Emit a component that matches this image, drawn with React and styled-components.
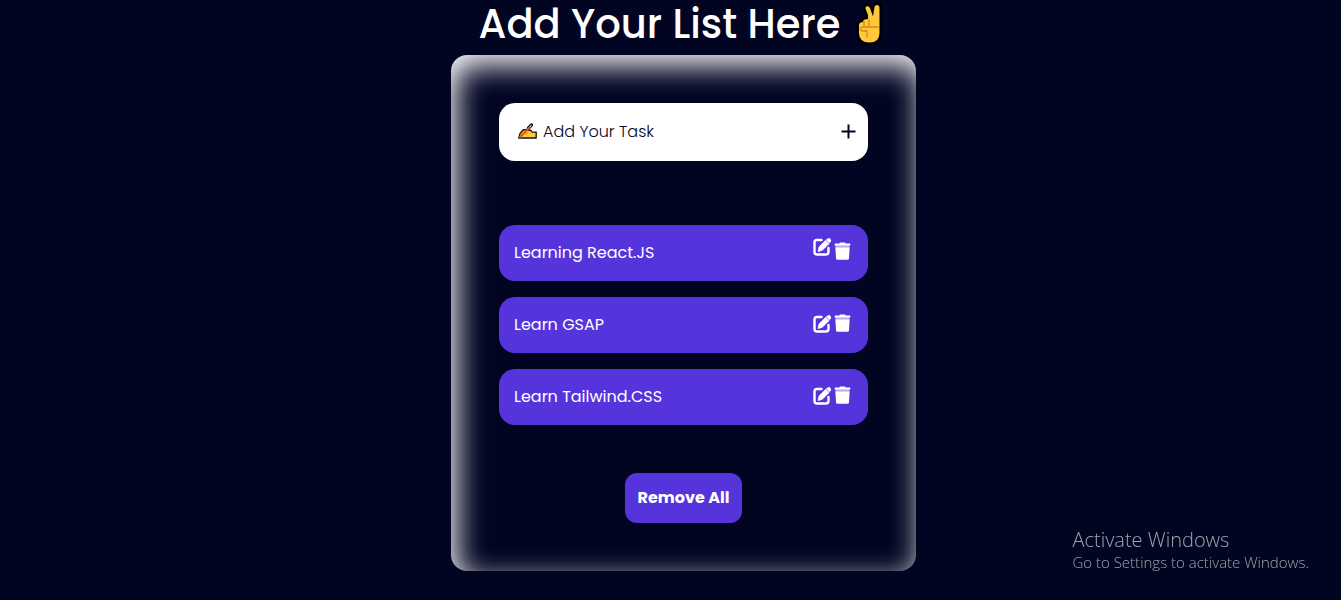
import React, { useState } from "react";
import styled, { createGlobalStyle } from "styled-components";

const GlobalStyle = createGlobalStyle`
  *, *::before, *::after { box-sizing: border-box; }
  body {
    margin: 0;
    background: #020522;
    color: #fff;
    font-family: Poppins, Inter, sans-serif;
    font-size: 16px;
  }
  button, input { font: inherit; }
`;

const Page = styled.main`
  display: flex;
  flex-direction: column;
  align-items: center;
  min-height: 100vh;
  padding: 0 0 24px 26px;
`;

const Title = styled.h1`
  display: flex;
  align-items: center;
  gap: 16px;
  margin: 0 0 7px;
  font-size: 40px;
  font-weight: 500;
  line-height: 48px;
`;

const Card = styled.section`
  display: flex;
  flex-direction: column;
  align-items: center;
  width: 100%;
  max-width: 465px;
  padding: 48px;
  border-radius: 16px;
  box-shadow: inset 5px 10px 30px #fff;
`;

const TaskForm = styled.form`
  display: flex;
  align-items: center;
  gap: 5px;
  width: 100%;
  height: 58px;
  margin-bottom: 64px;
  padding: 0 12px 2px 19px;
  border-radius: 16px;
  background: #fff;
`;

const TaskInput = styled.input`
  flex: 1;
  min-width: 0;
  padding: 0;
  border: 0;
  outline: 0;
  background: none;
  color: #020522;
  font-weight: 300;
  &::placeholder { color: #020522; opacity: 1; }
`;

const IconButton = styled.button`
  display: flex;
  padding: 0;
  border: 0;
  background: none;
  color: ${(p) => (p.$dark ? "#020522" : "#fff")};
  align-self: ${(p) => (p.$raised ? "flex-start" : "center")};
  cursor: pointer;
`;

const TaskList = styled.ul`
  display: flex;
  flex-direction: column;
  gap: 16px;
  width: 100%;
  margin: 0 0 48px;
  padding: 0;
  list-style: none;
`;

const TaskItem = styled.li`
  display: flex;
  align-items: center;
  justify-content: space-between;
  height: 56px;
  padding: 0 17px 2px 15px;
  border-radius: 16px;
  background: #5634db;
`;

const Actions = styled.div`
  display: flex;
  gap: 2px;
  height: 30px;
  padding-bottom: 2px;
`;

const RemoveButton = styled.button`
  height: 50px;
  padding: 0 13px 2px;
  border: 0;
  border-radius: 12px;
  background: #5634db;
  color: #fff;
  font-weight: 700;
  cursor: pointer;
`;

const Notice = styled.aside`
  position: fixed;
  right: 32px;
  bottom: 28px;
  color: #a2a3ab;
  font-family: "Segoe UI", "Open Sans", sans-serif;
  font-size: 15px;
  font-weight: 300;
  line-height: 20px;
`;

const NoticeTitle = styled.p`
  margin: 0;
  font-size: 20px;
  line-height: 24px;
`;

const NoticeText = styled.p`
  margin: 0;
`;

function VictoryHand() {
  const hand =
    "M19 25Q19 22 23 22V21Q24 19 28 19V15L25.500 8.500Q25 6.500 27 6.300Q29 6 30 8L33 16.500 34.500 7Q35 5 37.200 5Q39.500 5 39.500 7.500V33Q39.500 42.500 29.500 42.500Q19 42.500 19 33Z";
  return (
    <svg width="32" height="44" viewBox="16 2 32 44" aria-label="Victory hand" role="img">
      <path d={hand} fill="#000" stroke="#000" strokeWidth="5" strokeLinejoin="round" />
      <path d={hand} fill="#ffc83d" />
      <path
        d="M24 21.500V26.500M29 20V26.500M38.500 27H23Q20.500 27 20.500 29T23 31H27V37"
        fill="none"
        stroke="#d68b10"
        strokeWidth="1.300"
        strokeLinecap="round"
        strokeLinejoin="round"
      />
    </svg>
  );
}

function WritingHand() {
  return (
    <svg width="20" height="18" viewBox="0 0 20 18" aria-hidden="true">
      <path
        d="M0.800 16L2 11.500 5 8 9 7.500 13 8.500 14 10 18.200 10.200V16Z"
        fill="#ffc83d"
        stroke="#181008"
        strokeWidth="1.300"
        strokeLinejoin="round"
      />
      <path d="M10.500 6L13.500 3" stroke="#181008" strokeWidth="3.400" strokeLinecap="round" />
      <path d="M1.500 15.500L11.500 5.500" stroke="#e8502a" strokeWidth="2" />
      <path d="M11.500 5.500L13.500 3.200" stroke="#b8c2cc" strokeWidth="1.200" />
      <path d="M7.500 12.500l3-2.500" stroke="#f29b20" strokeWidth="1.400" />
    </svg>
  );
}

function PlusIcon() {
  return (
    <svg width="15" height="15" viewBox="0 0 15 15" aria-hidden="true">
      <path d="M7.500 0.500v14M0.500 7.500h14" stroke="currentColor" strokeWidth="2" />
    </svg>
  );
}

function EditIcon() {
  return (
    <svg width="19" height="19" viewBox="0 0 19 19" aria-hidden="true">
      <path
        d="M8.500 3H4Q1.500 3 1.500 5.500V15Q1.500 17.500 4 17.500H13Q15.500 17.500 15.500 15V11"
        fill="none"
        stroke="currentColor"
        strokeWidth="2.400"
        strokeLinecap="round"
      />
      <path d="M12.500 3L16.200 6.700" stroke="currentColor" strokeWidth="2" opacity="0.600" />
      <path
        d="M5.200 14.500L6 10 12.300 3.700 15.600 7 9.300 13.300Z"
        fill="currentColor"
        stroke="currentColor"
        strokeWidth="0.800"
        strokeLinejoin="round"
      />
      <path d="M13.300 2.800L14.500 1.500Q15.800 0.300 17.300 1.700T17.800 4.800L16.500 6Z" fill="currentColor" />
    </svg>
  );
}

function TrashIcon() {
  return (
    <svg width="17" height="18" viewBox="0 0 17 18" aria-hidden="true">
      <path
        d="M1 1.500H5.300L6.300 0.500H10.700L11.700 1.500H16Q17 2.500 16 3.800H1Q0 2.500 1 1.500Z"
        fill="currentColor"
      />
      <path d="M1.500 3.800H15.500V5.200H1.500Z" fill="currentColor" opacity="0.600" />
      <path d="M1.300 5.200H15.700L15 16.200Q14.900 17.700 13.300 17.700H3.700Q2.100 17.700 2 16.200Z" fill="currentColor" />
    </svg>
  );
}

const initialTasks = [
  { name: "Learning React.JS", active: true },
  { name: "Learn GSAP" },
  { name: "Learn Tailwind.CSS" },
];

export default function App() {
  const [tasks, setTasks] = useState(initialTasks);
  const [draft, setDraft] = useState("");

  const addTask = (event) => {
    event.preventDefault();
    if (!draft.trim()) return;
    setTasks([...tasks, { name: draft.trim() }]);
    setDraft("");
  };

  const removeTask = (index) => setTasks(tasks.filter((_, i) => i !== index));

  const editTask = (index) => {
    setDraft(tasks[index].name);
    removeTask(index);
  };

  return (
    <>
      <GlobalStyle />
      <Page>
        <Title>
          Add Your List Here
          <VictoryHand />
        </Title>
        <Card>
          <TaskForm onSubmit={addTask}>
            <WritingHand />
            <TaskInput
              aria-label="Add Your Task"
              placeholder="Add Your Task"
              value={draft}
              onChange={(event) => setDraft(event.target.value)}
            />
            <IconButton type="submit" aria-label="Add task" $dark>
              <PlusIcon />
            </IconButton>
          </TaskForm>
          <TaskList>
            {tasks.map((task, index) => (
              <TaskItem key={task.name}>
                {task.name}
                <Actions>
                  <IconButton
                    type="button"
                    aria-label={`Edit ${task.name}`}
                    $raised={task.active}
                    onClick={() => editTask(index)}
                  >
                    <EditIcon />
                  </IconButton>
                  <IconButton
                    type="button"
                    aria-label={`Delete ${task.name}`}
                    onClick={() => removeTask(index)}
                  >
                    <TrashIcon />
                  </IconButton>
                </Actions>
              </TaskItem>
            ))}
          </TaskList>
          <RemoveButton type="button" onClick={() => setTasks([])}>
            Remove All
          </RemoveButton>
        </Card>
      </Page>
      <Notice>
        <NoticeTitle>Activate Windows</NoticeTitle>
        <NoticeText>Go to Settings to activate Windows.</NoticeText>
      </Notice>
    </>
  );
}
